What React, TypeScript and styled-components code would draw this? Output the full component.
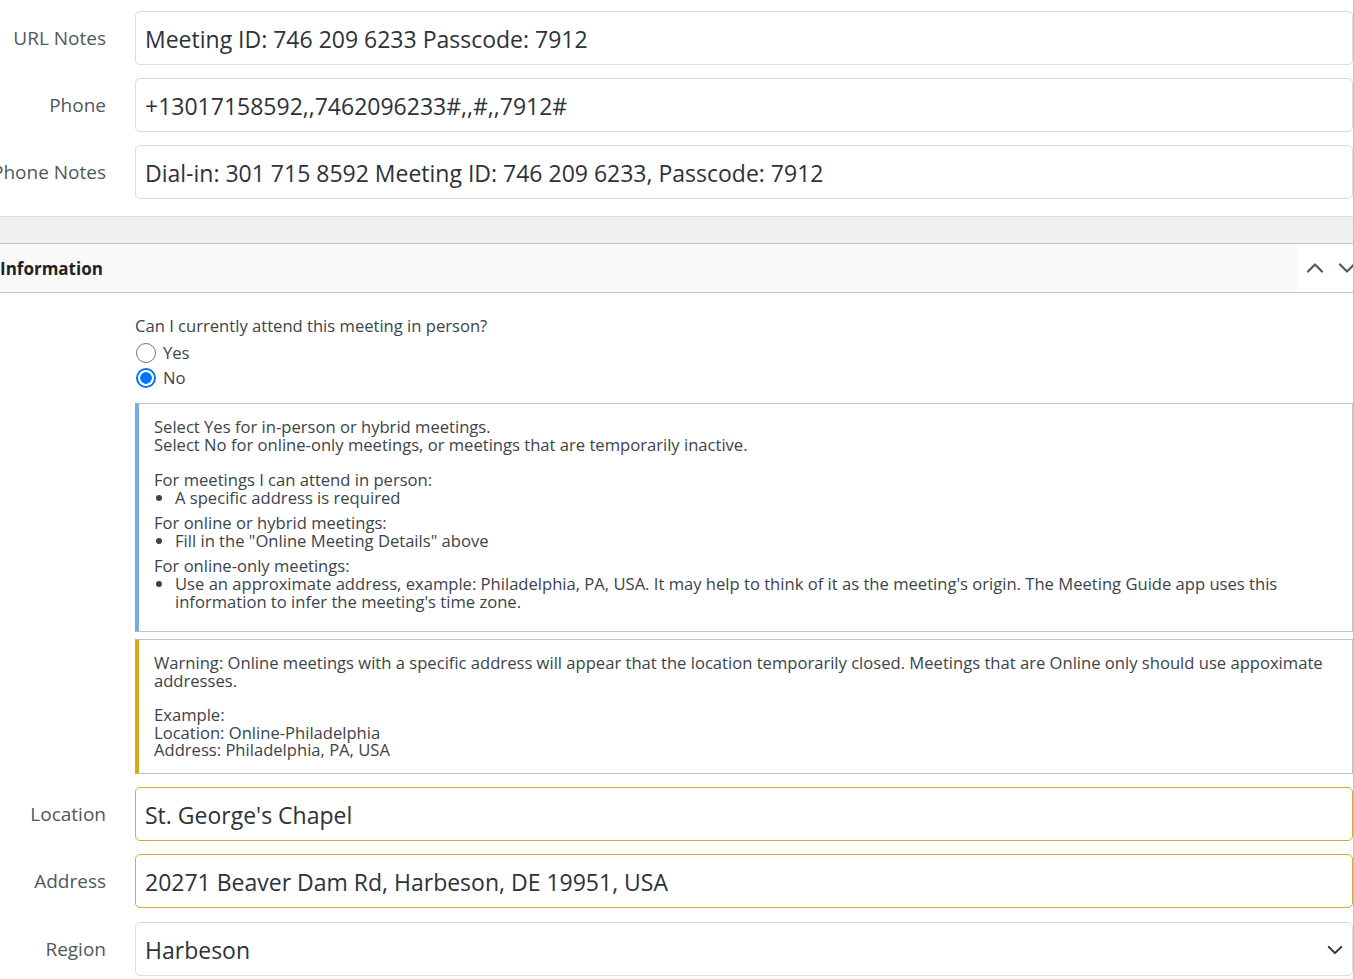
import React from 'react';
import styled, { createGlobalStyle } from 'styled-components';

const GlobalStyle = createGlobalStyle`
  html, body {
    margin: 0;
    padding: 0;
    background: #fff;
  }
  body {
    font-family: "Open Sans", "Noto Sans", "Liberation Sans", sans-serif;
    color: #3c434a;
    overflow: hidden;
  }
`;

const Page = styled.div`
  width: 1353px;
  height: 979px;
  border-right: 1px solid #c3c4c7;
  overflow: hidden;
`;

const Section = styled.section<{ $bordered?: boolean }>`
  background: #fff;
  border-top: ${p => (p.$bordered ? '1px solid #c3c4c7' : 'none')};
  border-bottom: 1px solid #dcdcde;
`;

const Gap = styled.div`
  height: 26px;
  background: #f0f0f1;
`;

const Fields = styled.div`
  display: flex;
  flex-direction: column;
  gap: 13px;
  padding: 11px 0 17px;
`;

const Row = styled.div`
  display: flex;
  align-items: center;
`;

const Label = styled.div`
  width: 106px;
  flex-shrink: 0;
  margin-right: 29px;
  display: flex;
  justify-content: flex-end;
  white-space: nowrap;
  font-size: 19px;
  color: #50575e;
`;

const Input = styled.div<{ $warn?: boolean }>`
  flex: 1;
  height: 54px;
  box-sizing: border-box;
  display: flex;
  align-items: center;
  padding: 2px 9px 0;
  border: 1px solid ${p => (p.$warn ? '#d9a93c' : '#dcdcde')};
  border-radius: 5px;
  background: #fff;
  font-size: 23px;
  color: #2c3338;
  white-space: nowrap;
`;

const Select = styled(Input)`
  justify-content: space-between;
  padding-right: 8px;
`;

const Header = styled.div`
  display: flex;
  height: 48px;
  border-bottom: 1px solid #c3c4c7;
`;

const Title = styled.h2`
  flex: 1;
  margin: 0;
  display: flex;
  align-items: center;
  background: #f9f9f9;
  font-size: 17px;
  font-weight: 700;
  color: #1d2327;
  white-space: nowrap;
`;

const Handles = styled.div`
  display: flex;
  width: 54px;
  overflow: hidden;
  background: #fff;
  padding-left: 2px;
`;

const HandleButton = styled.button`
  width: 32px;
  flex-shrink: 0;
  border: 0;
  background: transparent;
  padding: 0;
  display: flex;
  align-items: center;
  justify-content: center;
  color: #50575e;
`;

const Body = styled.div`
  padding: 23px 0 0 135px;
  display: flex;
  flex-direction: column;
`;

const Question = styled.div`
  font-size: 16.6px;
  line-height: 20px;
  color: #3c434a;
`;

const RadioGroup = styled.div`
  display: flex;
  flex-direction: column;
  margin-top: 4px;
`;

const RadioLabel = styled.label`
  display: flex;
  align-items: center;
  height: 25px;
  font-size: 16.6px;
  color: #3c434a;
`;

const Radio = styled.span<{ $checked?: boolean }>`
  width: 20px;
  height: 20px;
  box-sizing: border-box;
  border-radius: 50%;
  margin: 0 7px 0 1px;
  border: ${p => (p.$checked ? '2px solid #0075ff' : '1.5px solid #767676')};
  background: ${p => (p.$checked ? 'radial-gradient(circle, #0075ff 0 5.5px, #fff 6px)' : '#fff')};
`;

const Notice = styled.div<{ $tone: 'info' | 'warning' }>`
  margin-top: ${p => (p.$tone === 'info' ? '13px' : '7px')};
  border: 1px solid #c3c4c7;
  border-left: 4px solid ${p => (p.$tone === 'info' ? '#72aee6' : '#dba617')};
  padding: 14px 14px ${p => (p.$tone === 'info' ? '20px' : '14px')} 15px;
  font-size: 16.6px;
  line-height: ${p => (p.$tone === 'info' ? '18px' : '17.5px')};
  color: #3c434a;
  p {
    margin: 0;
  }
  p + p {
    margin-top: 17px;
  }
`;

const GroupList = styled.div`
  margin-top: 17px;
`;

const Group = styled.div`
  & + & {
    margin-top: 7px;
  }
  ul {
    margin: 0;
    padding-left: 21px;
  }
`;

const LowerFields = styled(Fields)`
  gap: 13.5px;
  padding-top: 13px;
`;

const Chevron = ({ dir, size = 20 }: { dir: 'up' | 'down'; size?: number }) => (
  <svg width={size} height={size} viewBox="0 0 20 20" fill="none">
    <path
      d={dir === 'up' ? 'M3 13.5L10 6.5L17 13.5' : 'M3 6.5L10 13.5L17 6.5'}
      stroke="currentColor"
      strokeWidth="2.2"
      strokeLinecap="round"
      strokeLinejoin="round"
    />
  </svg>
);

const App: React.FC = () => {
  return (
    <>
      <GlobalStyle />
      <Page>
        <Section>
          <Fields>
            <Row>
              <Label>URL Notes</Label>
              <Input>Meeting ID: 746 209 6233 Passcode: 7912</Input>
            </Row>
            <Row>
              <Label>Phone</Label>
              <Input>+13017158592,,7462096233#,,#,,7912#</Input>
            </Row>
            <Row>
              <Label>Phone Notes</Label>
              <Input>Dial-in: 301 715 8592 Meeting ID: 746 209 6233, Passcode: 7912</Input>
            </Row>
          </Fields>
        </Section>
        <Gap />
        <Section $bordered>
          <Header>
            <Title>Information</Title>
            <Handles>
              <HandleButton aria-label="Move up"><Chevron dir="up" /></HandleButton>
              <HandleButton aria-label="Move down"><Chevron dir="down" /></HandleButton>
            </Handles>
          </Header>
          <Body>
            <Question>Can I currently attend this meeting in person?</Question>
            <RadioGroup>
              <RadioLabel><Radio />Yes</RadioLabel>
              <RadioLabel><Radio $checked />No</RadioLabel>
            </RadioGroup>
            <Notice $tone="info">
              <p>
                Select Yes for in-person or hybrid meetings.<br />
                Select No for online-only meetings, or meetings that are temporarily inactive.
              </p>
              <GroupList>
                <Group>
                  For meetings I can attend in person:
                  <ul><li>A specific address is required</li></ul>
                </Group>
                <Group>
                  For online or hybrid meetings:
                  <ul><li>Fill in the "Online Meeting Details" above</li></ul>
                </Group>
                <Group>
                  For online-only meetings:
                  <ul>
                    <li>
                      Use an approximate address, example: Philadelphia, PA, USA. It may help to think of it as the meeting's origin. The Meeting Guide app uses this information to infer the meeting's time zone.
                    </li>
                  </ul>
                </Group>
              </GroupList>
            </Notice>
            <Notice $tone="warning">
              <p>
                Warning: Online meetings with a specific address will appear that the location temporarily closed. Meetings that are Online only should use appoximate addresses.
              </p>
              <p>
                Example:<br />
                Location: Online-Philadelphia<br />
                Address: Philadelphia, PA, USA
              </p>
            </Notice>
          </Body>
          <LowerFields>
            <Row>
              <Label>Location</Label>
              <Input $warn>St. George's Chapel</Input>
            </Row>
            <Row>
              <Label>Address</Label>
              <Input $warn>20271 Beaver Dam Rd, Harbeson, DE 19951, USA</Input>
            </Row>
            <Row>
              <Label>Region</Label>
              <Select>
                Harbeson
                <Chevron dir="down" size={18} />
              </Select>
            </Row>
          </LowerFields>
        </Section>
      </Page>
    </>
  );
};

export default App;
